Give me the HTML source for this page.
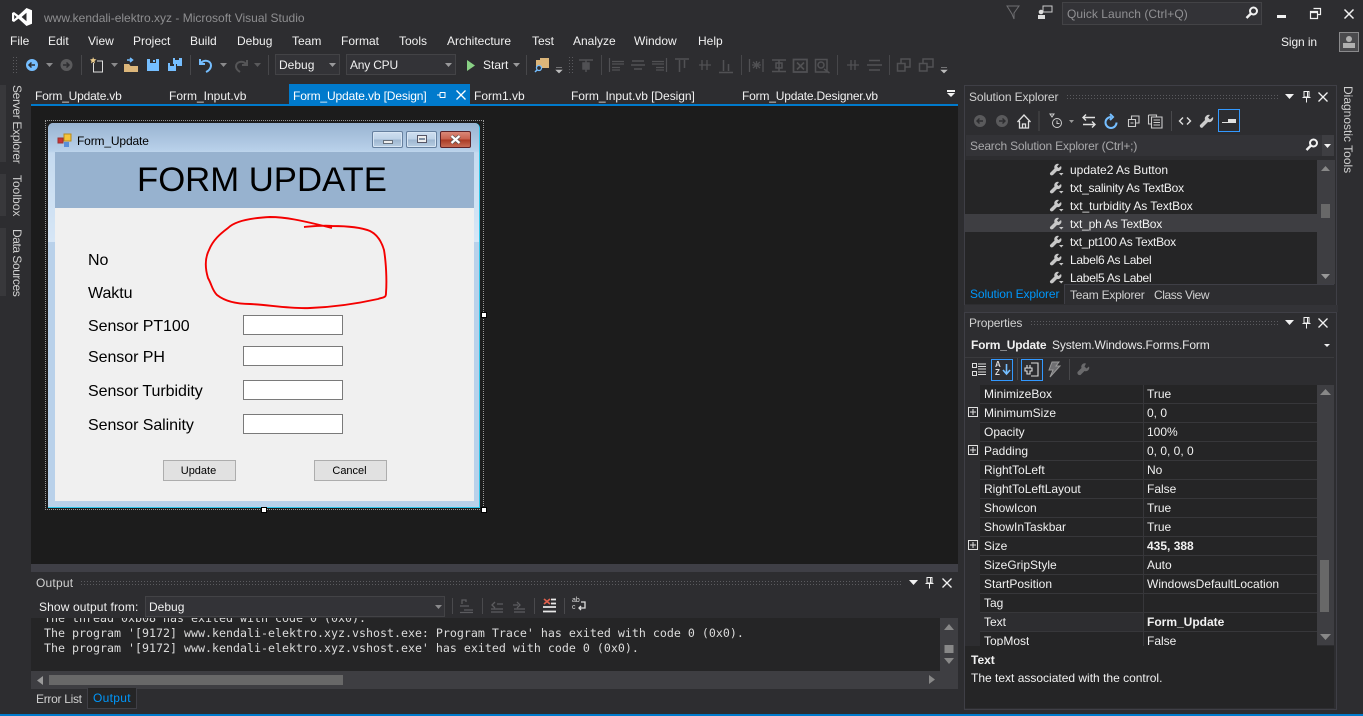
<!DOCTYPE html>
<html><head><meta charset="utf-8"><style>
html,body{margin:0;padding:0;width:1363px;height:716px;overflow:hidden;background:#2d2d30}
body{position:relative;font:12px/16px "Liberation Sans",sans-serif;color:#f1f1f1}
.a{position:absolute}
.t{position:absolute;white-space:nowrap;line-height:16px}
.m{font-size:12px;color:#f1f1f1;top:33px}
.tab{top:88px;color:#f1f1f1}
.g{background-image:radial-gradient(#5a5a5e 0.6px,transparent .7px);background-size:3px 3px}
.sl{left:1070px;color:#f1f1f1}
.pn{position:absolute;left:984px;color:#f1f1f1;white-space:nowrap}
.pv{position:absolute;left:1147px;color:#f1f1f1;white-space:nowrap}
.fl{position:absolute;color:#000;font-size:16px;line-height:20px;left:88px;white-space:nowrap;letter-spacing:-.06px}
.tb{position:absolute;left:243px;width:98px;height:18px;background:#fff;border:1px solid #7a7a7a}
.btn{position:absolute;top:460px;width:71px;height:19px;background:#e1e1e1;border:1px solid #adadad;color:#000;text-align:center;font-size:11px;line-height:21px;text-indent:-2px}
.wb{position:absolute;top:131px;width:29px;height:15px;border:1px solid #66809f;border-radius:2px;background:linear-gradient(#cfdff0 0,#bdd2e7 48%,#9db6d0 52%,#b9cee3 100%);box-shadow:inset 0 0 0 1px #d8e6f4}
svg{position:absolute;overflow:visible}
</style></head><body>

<!-- title bar -->
<svg style="left:11px;top:7px" width="22" height="20" viewBox="0 0 22 20"><path d="M15.500 1 L21 3.200 V16.800 L15.500 19 L7.500 11.600 L3 15 L1 14 V6 L3 5 L7.500 8.400 Z M15.500 5.800 L10.600 10 L15.500 14.200 Z M3.200 7.800 V12.200 L5.600 10 Z" fill="#fff" fill-rule="evenodd"/></svg>
<div class="t" style="left:44px;top:10px;color:#8e8e90">www.kendali-elektro.xyz - Microsoft Visual Studio</div>
<svg style="left:1006px;top:5px" width="14" height="15"><path d="M1 1H13L8 8V14L6 9Z" fill="none" stroke="#6f6f72" stroke-width="1"/></svg>
<svg style="left:1037px;top:5px" width="16" height="15"><rect x="6" y="1" width="9" height="6" fill="none" stroke="#ccc"/><circle cx="4" cy="7" r="2.300" fill="#ddd"/><rect x="1" y="10" width="7" height="4" fill="#ddd"/></svg>
<div class="a" style="left:1062px;top:2px;width:198px;height:21px;background:#333337;border:1px solid #434346"></div>
<div class="t" style="left:1067px;top:6px;color:#909093;letter-spacing:.05px">Quick Launch (Ctrl+Q)</div>
<svg style="left:1245px;top:6px" width="14" height="14"><circle cx="8.500" cy="5" r="3.500" fill="none" stroke="#f1f1f1" stroke-width="2"/><path d="M6 7.500L1.500 12" stroke="#f1f1f1" stroke-width="2.400"/></svg>
<div class="a" style="left:1277px;top:15px;width:9px;height:3px;background:#f1f1f1"></div>
<svg style="left:1310px;top:8px" width="12" height="12"><path d="M3.500 .5H10.500V6.500H8M.5 3.500H7.500V10.500H.5ZM.5 4.500H7.500" fill="none" stroke="#f1f1f1" stroke-width="1.200"/></svg>
<svg style="left:1344px;top:9px" width="10" height="10"><path d="M.5 .5L9.500 9.500M9.500 .5L.5 9.500" stroke="#f1f1f1" stroke-width="1.500"/></svg>

<!-- menu -->
<div class="t m" style="left:10px">File</div><div class="t m" style="left:48px">Edit</div><div class="t m" style="left:88px">View</div><div class="t m" style="left:133px">Project</div><div class="t m" style="left:190px">Build</div><div class="t m" style="left:237px">Debug</div><div class="t m" style="left:292px">Team</div><div class="t m" style="left:341px">Format</div><div class="t m" style="left:399px">Tools</div><div class="t m" style="left:447px">Architecture</div><div class="t m" style="left:532px">Test</div><div class="t m" style="left:573px">Analyze</div><div class="t m" style="left:634px">Window</div><div class="t m" style="left:698px">Help</div>
<div class="t" style="left:1281px;top:34px;letter-spacing:-.1px">Sign in</div>
<div class="a" style="left:1339px;top:32px;width:18px;height:18px;background:#4a4a4d;border:1px solid #8a8a8c"></div>
<svg style="left:1342px;top:35px" width="14" height="14"><circle cx="7" cy="4" r="3" fill="#b0b0b0"/><rect x="1" y="8" width="12" height="5" fill="#b0b0b0"/></svg>

<!-- toolbar -->
<div class="a g" style="left:12px;top:56px;width:5px;height:17px"></div>
<svg style="left:25px;top:58px" width="14" height="14"><circle cx="7" cy="7" r="6" fill="#75beff"/><path d="M10 7H4M6.500 4.500L4 7L6.500 9.500" stroke="#2d2d30" stroke-width="1.500" fill="none"/></svg>
<svg style="left:46px;top:63px" width="7" height="4"><path d="M0 0H7L3.500 4Z" fill="#8a8a8c"/></svg>
<svg style="left:60px;top:58px" width="13" height="14"><circle cx="6.500" cy="7" r="6" fill="#5a5a5c"/><path d="M3 7H9M6.500 4.500L9 7L6.500 9.500" stroke="#2d2d30" stroke-width="1.500" fill="none"/></svg>
<div class="a" style="left:81px;top:55px;width:1px;height:20px;background:#47474a"></div>
<svg style="left:90px;top:57px" width="15" height="16"><path d="M3.500 6V15H12.500V4H7" fill="none" stroke="#ddd"/><path d="M3 0L4 2L6.500 2.500L4.500 4L5 6.500L3 5L1 6.500L1.500 4L0 2.500L2.500 2Z" fill="#e8c98a"/></svg>
<svg style="left:111px;top:63px" width="7" height="4"><path d="M0 0H7L3.500 4Z" fill="#8a8a8c"/></svg>
<svg style="left:124px;top:57px" width="15" height="16"><path d="M0 7H5L6.500 9H14V15H0Z" fill="#dcb67a"/><path d="M3 3H8M6 1L8.500 3L6 5" fill="none" stroke="#75beff" stroke-width="1.500"/></svg>
<svg style="left:147px;top:59px" width="12" height="12"><path d="M0 0H3V4H9V0H12V12H0Z" fill="#75beff"/><rect x="6" y="1" width="2" height="2" fill="#75beff"/></svg>
<svg style="left:168px;top:58px" width="15" height="14"><path d="M5 0H7V2H11V0H14V8H9V6H5Z" fill="#75beff"/><path d="M0 5H2V8H6V5H8V13H0Z" fill="#75beff"/></svg>
<div class="a" style="left:190px;top:55px;width:1px;height:20px;background:#47474a"></div>
<svg style="left:198px;top:57px" width="15" height="16"><path d="M2 2V7H7M2.500 6.500C6 2 13 3.500 13 8.500C13 11.500 10.500 14 8 15" fill="none" stroke="#75beff" stroke-width="2"/></svg>
<svg style="left:220px;top:63px" width="7" height="4"><path d="M0 0H7L3.500 4Z" fill="#8a8a8c"/></svg>
<svg style="left:234px;top:58px" width="14" height="15"><path d="M13 2V7H8M12.500 6.500C9 2 2 3.500 2 8.500C2 11.500 4.500 13 6 14" fill="none" stroke="#555557" stroke-width="2"/></svg>
<svg style="left:254px;top:63px" width="7" height="4"><path d="M0 0H7L3.500 4Z" fill="#5a5a5c"/></svg>
<div class="a" style="left:268px;top:55px;width:1px;height:20px;background:#47474a"></div>
<div class="a" style="left:275px;top:54px;width:63px;height:19px;background:#333337;border:1px solid #434346"></div>
<div class="t" style="left:279px;top:57px">Debug</div>
<svg style="left:329px;top:63px" width="7" height="4"><path d="M0 0H7L3.500 4Z" fill="#9a9a9c"/></svg>
<div class="a" style="left:346px;top:54px;width:108px;height:19px;background:#333337;border:1px solid #434346"></div>
<div class="t" style="left:350px;top:57px;letter-spacing:-.2px">Any CPU</div>
<svg style="left:445px;top:63px" width="7" height="4"><path d="M0 0H7L3.500 4Z" fill="#9a9a9c"/></svg>
<svg style="left:467px;top:60px" width="9" height="11"><path d="M0 0L8 5.500L0 11Z" fill="#89d185"/></svg>
<div class="t" style="left:483px;top:57px">Start</div>
<svg style="left:513px;top:63px" width="7" height="4"><path d="M0 0H7L3.500 4Z" fill="#9a9a9c"/></svg>
<div class="a" style="left:526px;top:55px;width:1px;height:20px;background:#47474a"></div>
<svg style="left:534px;top:57px" width="16" height="16"><path d="M2 3H6V1H15V11H2Z" fill="#dcb67a"/><circle cx="5" cy="11" r="2.500" fill="#2d2d30" stroke="#75beff" stroke-width="1.300"/><path d="M3 13L1 15" stroke="#75beff" stroke-width="1.500"/></svg>
<svg style="left:555px;top:67px" width="8" height="7"><path d="M1 .5H7M1 3H7L4 6Z" fill="#bbb" stroke="#bbb" stroke-width=".6"/></svg>
<div class="a g" style="left:568px;top:56px;width:5px;height:17px"></div>
<svg style="left:0;top:0" width="1000" height="80" fill="none" stroke="#515154" stroke-width="1.500">
<path d="M579 60H593M586 60V72"/><path d="M583 63H589V69H583Z" fill="#515154"/>
<path d="M609.500 58V72M612 61.500H624M612 64H624M612 67.500H620M612 70H620" stroke-width="1.200"/>
<path d="M632 61H644M631 65H645M634 69H642"/>
<path d="M666.500 58V72M652 61.500H664M652 64H664M656 67.500H664M656 70H664" stroke-width="1.200"/>
<path d="M675 59H689M679.500 60V72M684.500 60V68" />
<path d="M699 65H711M702 60V70M707 60V70" stroke-width="1.300"/>
<path d="M719 72.500H733M723.500 60V71M728.500 64V71"/>
<path d="M749.500 59V72M763 59V72M752 65H761M756.500 61V69M753 62L760 68M760 62L753 68" stroke-width="1.300"/>
<path d="M772 60H786M772 71.500H786M779 60V71.500M776 63H782V68H776Z"/>
<path d="M793.500 59.500H807V72H793.500ZM797 62.500L804 69.500M804 62.500L797 69.500" stroke-width="1.700"/>
<path d="M815.500 59.500H827V72H815.500ZM824 69L829.500 73"/><circle cx="821" cy="65" r="3"/>
<path d="M847 65H859M851 60V70M855 60V70" stroke-width="1.300"/>
<path d="M869 60.500H880M867 65H882M869 70H880"/>
<path d="M897.500 63.500V71H905V63.500ZM901 63V59H910V67H905"/>
<path d="M919.500 63.500V71H927V63.500ZM923 63V59H933V67H927"/>
</svg>
<div class="a" style="left:601px;top:55px;width:1px;height:20px;background:#47474a"></div>
<div class="a" style="left:741px;top:55px;width:1px;height:20px;background:#47474a"></div>
<div class="a" style="left:837px;top:55px;width:1px;height:20px;background:#47474a"></div>
<div class="a" style="left:889px;top:55px;width:1px;height:20px;background:#47474a"></div>
<svg style="left:940px;top:67px" width="8" height="7"><path d="M1 .5H7M1 3H7L4 6Z" fill="#bbb" stroke="#bbb" stroke-width=".6"/></svg>

<!-- left strip -->
<div class="a" style="left:0;top:85px;width:6px;height:77px;background:#38383b"></div>
<div class="a" style="left:0;top:174px;width:6px;height:42px;background:#38383b"></div>
<div class="a" style="left:0;top:228px;width:6px;height:68px;background:#38383b"></div>
<div class="t" style="left:11px;top:85px;transform-origin:0 0;transform:rotate(90deg) translate(0,-14px);color:#d0d0d0;letter-spacing:-.33px">Server Explorer</div>
<div class="t" style="left:11px;top:175px;transform-origin:0 0;transform:rotate(90deg) translate(0,-14px);color:#d0d0d0">Toolbox</div>
<div class="t" style="left:11px;top:229px;transform-origin:0 0;transform:rotate(90deg) translate(0,-14px);color:#d0d0d0;letter-spacing:-.45px">Data Sources</div>

<!-- tabs -->
<div class="a" style="left:289px;top:84px;width:181px;height:20px;background:#007acc"></div>
<div class="a" style="left:31px;top:104px;width:927px;height:2px;background:#007acc"></div>
<div class="t tab" style="left:35px;letter-spacing:-.2px">Form_Update.vb</div>
<div class="t tab" style="left:169px">Form_Input.vb</div>
<div class="t tab" style="left:293px;color:#fff;letter-spacing:-.14px">Form_Update.vb [Design]</div>
<svg style="left:437px;top:91px" width="9" height="8"><path d="M0 4H3M3 1.500V6.500M3 1.500H8V6.500H3" fill="none" stroke="#fff"/></svg>
<svg style="left:456px;top:90px" width="10" height="10"><path d="M.5 .5L9.500 9.500M9.500 .5L.5 9.500" stroke="#fff" stroke-width="1.300"/></svg>
<div class="t tab" style="left:474px">Form1.vb</div>
<div class="t tab" style="left:571px;letter-spacing:-.04px">Form_Input.vb [Design]</div>
<div class="t tab" style="left:742px;letter-spacing:-.18px">Form_Update.Designer.vb</div>
<svg style="left:947px;top:90px" width="8" height="8"><path d="M0 0H8V2H0ZM0 3H8L4 7Z" fill="#f1f1f1"/></svg>

<!-- designer -->
<div class="a" style="left:31px;top:106px;width:927px;height:458px;background:#1c1c1c"></div>
<div class="a" style="left:45px;top:120px;width:437px;height:388px;border:1px dotted #9a9a9a"></div>
<div class="a" style="left:48px;top:123px;width:431px;height:384px;background:#b9d1ea;border-right:1px solid #2ec5e8;border-bottom:1px solid #2ec5e8;border-radius:5px 5px 0 0"></div>
<div class="a" style="left:48px;top:123px;width:431px;height:119px;border-radius:5px 5px 0 0;background:linear-gradient(#99b4d1 0,#b9d1ea 28px,#c5daef 30px,#d6e6f6 119px)"></div>
<svg style="left:58px;top:134px" width="14" height="14"><rect x="0" y="4" width="5" height="5" fill="#c33" stroke="#933"/><rect x="6" y="0" width="7" height="7" fill="#f5c53a" stroke="#b88a20"/><rect x="6" y="8" width="5" height="5" fill="#5a8fd8"/></svg>
<div class="t" style="left:77px;top:133px;color:#000;letter-spacing:-.15px">Form_Update</div>
<div class="wb" style="left:372px"></div>
<div class="a" style="left:383px;top:140px;width:10px;height:4px;background:#eee;border:1px solid #66707c;box-sizing:border-box"></div>
<div class="wb" style="left:406px"></div>
<div class="a" style="left:417px;top:135px;width:10px;height:8px;background:#eee;border:1px solid #556;box-sizing:border-box"></div>
<div class="a" style="left:419px;top:138px;width:6px;height:2px;background:#7f8fa3"></div>
<div class="a" style="left:440px;top:131px;width:29px;height:15px;border:1px solid #5d2228;border-radius:2px;background:linear-gradient(#d98878 0,#c9614e 48%,#a93a24 52%,#c66a54 100%)"></div>
<svg style="left:450px;top:135px" width="11" height="9"><path d="M1.500 1L9.500 8M9.500 1L1.500 8" stroke="#555" stroke-width="3.600"/><path d="M1.500 1L9.500 8M9.500 1L1.500 8" stroke="#fff" stroke-width="2.200"/></svg>
<div class="a" style="left:55px;top:152px;width:419px;height:349px;background:#f0f0f0"></div>
<div class="a" style="left:55px;top:152px;width:419px;height:56px;background:#97b2cf"></div>
<div class="t" style="left:137px;top:160px;color:#000;font-size:34.700px;line-height:41px">FORM UPDATE</div>
<svg style="left:0;top:0" width="500" height="320"><path d="M304 227 C315 226 325 225 332 226 C345 226 360 227 370 231 C378 235 382 243 384 250 C386 262 387 280 386 293 C386 298 384 297 378 299 C360 303 335 307 310 308 C290 309 270 305 250 304 C238 304 226 302 217 295 C212 290 212 285 208 278 C205 268 205 258 209 250 C213 240 220 234 228 228 C235 221 250 218 270 217 C285 217 300 220 332 228" fill="none" stroke="#f40000" stroke-width="1.900"/></svg>
<div class="fl" style="top:251px">No</div>
<div class="fl" style="top:284px">Waktu</div>
<div class="fl" style="top:317px">Sensor PT100</div>
<div class="fl" style="top:348px">Sensor PH</div>
<div class="fl" style="top:382px">Sensor Turbidity</div>
<div class="fl" style="top:416px">Sensor Salinity</div>
<div class="tb" style="top:315px"></div><div class="tb" style="top:346px"></div><div class="tb" style="top:380px"></div><div class="tb" style="top:414px"></div>
<div class="btn" style="left:163px">Update</div>
<div class="btn" style="left:314px">Cancel</div>
<div class="a" style="left:481px;top:312px;width:4px;height:4px;background:#fff;border:1px solid #000"></div>
<div class="a" style="left:261px;top:507px;width:4px;height:4px;background:#fff;border:1px solid #000"></div>
<div class="a" style="left:481px;top:507px;width:4px;height:4px;background:#fff;border:1px solid #000"></div>

<!-- output panel -->
<div class="a" style="left:31px;top:564px;width:927px;height:8px;background:#3f3f46"></div>
<div class="t" style="left:36px;top:575px;color:#d0d0d0;letter-spacing:.2px">Output</div>
<div class="a g" style="left:80px;top:580px;width:822px;height:5px"></div>
<svg style="left:909px;top:580px" width="9" height="5"><path d="M0 0H9L4.500 5Z" fill="#f1f1f1"/></svg>
<svg style="left:925px;top:577px" width="9" height="12"><path d="M2 .5H7V6H2ZM.5 6.500H8.500M4.500 6.500V11.500M5.500 1V6" fill="none" stroke="#f1f1f1"/></svg>
<svg style="left:942px;top:578px" width="10" height="10"><path d="M.5 .5L9.500 9.500M9.500 .5L.5 9.500" stroke="#f1f1f1" stroke-width="1.300"/></svg>
<div class="t" style="left:39px;top:599px;color:#f1f1f1;letter-spacing:.12px">Show output from:</div>
<div class="a" style="left:145px;top:596px;width:298px;height:19px;background:#333337;border:1px solid #434346"></div>
<div class="t" style="left:149px;top:599px">Debug</div>
<svg style="left:435px;top:605px" width="7" height="4"><path d="M0 0H7L3.500 4Z" fill="#8a8a8c"/></svg>
<svg style="left:0;top:0" width="600" height="620" fill="none" stroke="#5c5c5f" stroke-width="1.300"><path d="M452.500 598V614M482.500 598V614M534.500 598V614M564.500 598V614" stroke="#4a4a4d" stroke-width="1"/><path d="M462 604V600H466V602M460 606H469M464 610H473M460 612.500H473"/><path d="M495 602L492 605L495 608M497 604H503M491 609H503M491 612H503"/><path d="M517 602L520 605L517 608M513 605H518M514 609H525M514 612H525" /></svg>
<svg style="left:543px;top:598px" width="13" height="16"><path d="M1 1L7 6M7 1L1 6" stroke="#e0614e" stroke-width="1.600"/><path d="M8 1.500H13M8 5.500H13M0 9H13M0 13.500H13" stroke="#e8e8e8" stroke-width="1.800"/></svg>
<div class="t" style="left:572px;top:597px;font-size:7px;line-height:7px;color:#ddd">ab<br>c</div>
<svg style="left:578px;top:600px" width="9" height="11"><path d="M1 8H7V2H3M3 6L1 8L3 10" fill="none" stroke="#ddd" stroke-width="1.300"/></svg>
<div class="a" style="left:31px;top:618px;width:911px;height:53px;background:#252526;overflow:hidden;font:11.630px/15px 'DejaVu Sans Mono',monospace;color:#dcdcdc;white-space:nowrap">
<div class="a" style="left:13px;top:-7px">The thread 0xb08 has exited with code 0 (0x0).</div>
<div class="a" style="left:13px;top:8px">The program '[9172] www.kendali-elektro.xyz.vshost.exe: Program Trace' has exited with code 0 (0x0).</div>
<div class="a" style="left:13px;top:23px">The program '[9172] www.kendali-elektro.xyz.vshost.exe' has exited with code 0 (0x0).</div>
</div>
<div class="a" style="left:940px;top:618px;width:18px;height:53px;background:#3e3e42"></div>
<svg style="left:944px;top:624px" width="10" height="40"><path d="M0 6L5 0L10 6Z" fill="#888"/><rect x=".5" y="21" width="9" height="8" fill="#888"/><path d="M0 34H10L5 40Z" fill="#888"/></svg>
<div class="a" style="left:31px;top:671px;width:927px;height:18px;background:#3e3e42"></div>
<div class="a" style="left:49px;top:675px;width:294px;height:10px;background:#686868"></div>
<svg style="left:37px;top:676px" width="6" height="9"><path d="M6 0V9L0 4.500Z" fill="#999"/></svg>
<svg style="left:929px;top:675px" width="6" height="9"><path d="M0 0V9L6 4.500Z" fill="#888"/></svg>
<div class="t" style="left:36px;top:691px;color:#d0d0d0;letter-spacing:-.3px">Error List</div>
<div class="a" style="left:87px;top:688px;width:48px;height:20px;background:#252526;border:1px solid #3f3f46;border-top:0"></div>
<div class="t" style="left:93px;top:690px;color:#0097fb;letter-spacing:.3px">Output</div>

<!-- solution explorer -->
<div class="a" style="left:964px;top:85px;width:371px;height:225px;background:#2d2d30;border:1px solid #3f3f46"></div>
<div class="t" style="left:969px;top:89px;color:#d0d0d0;letter-spacing:-.12px">Solution Explorer</div>
<div class="a g" style="left:1066px;top:94px;width:213px;height:6px"></div>
<svg style="left:1285px;top:94px" width="9" height="5"><path d="M0 0H9L4.500 5Z" fill="#f1f1f1"/></svg>
<svg style="left:1302px;top:91px" width="9" height="12"><path d="M2 .5H7V6H2ZM.5 6.500H8.500M4.500 6.500V11.500M5.500 1V6" fill="none" stroke="#f1f1f1"/></svg>
<svg style="left:1318px;top:92px" width="10" height="10"><path d="M.5 .5L9.500 9.500M9.500 .5L.5 9.500" stroke="#f1f1f1" stroke-width="1.300"/></svg>
<svg style="left:974px;top:114px" width="250" height="16"><circle cx="6" cy="7" r="6" fill="#5a5a5c"/><path d="M9 7H3M5.500 4.500L3 7L5.500 9.500" stroke="#2d2d30" stroke-width="1.400" fill="none"/><circle cx="28" cy="7" r="6" fill="#5a5a5c"/><path d="M25 7H31M28.500 4.500L31 7L28.500 9.500" stroke="#2d2d30" stroke-width="1.400" fill="none"/><path d="M43.500 8L50 1L56.500 8M45.500 7V14H54.500V7M48.500 14V10H51.500V14" fill="none" stroke="#e0e0e0" stroke-width="1.300"/><path d="M65 -3V17" stroke="#4a4a4d"/><circle cx="83" cy="9" r="4.500" fill="none" stroke="#ccc"/><path d="M83 6.500V9.500H85.500M76 0H80L78 3Z" fill="none" stroke="#ccc"/><path d="M95 6H100L97.500 9Z" fill="#999"/><path d="M110 3.500H121M112 .5L109 3.500L112 6.500M109 10.500H120M118 7.500L121 10.500L118 13.500" fill="none" stroke="#e0e0e0" stroke-width="1.400"/><path d="M137 3A5.500 5.500 0 1 0 142.500 8.500M136 0L139 3L136 6" fill="none" stroke="#75beff" stroke-width="2"/><path d="M154.500 5.500H161.500V12.500H154.500ZM157.500 5V2H165V9H162M156.500 9H159.500" fill="none" stroke="#ccc" stroke-width="1.100"/><path d="M174.500 1H182.500V3M174.500 1V10H177.500M177.500 3H188V14H177.500ZM179.500 6H186M179.500 8.500H186M179.500 11H186" fill="none" stroke="#ccc" stroke-width="1.100"/><path d="M197.500 -3V17" stroke="#4a4a4d"/><path d="M209 3.500L205.500 7L209 10.500M213 3.500L216.500 7L213 10.500" fill="none" stroke="#e0e0e0" stroke-width="1.400"/><path d="M236 1A4 4 0 0 0 231 6L226 11C225 13 228 15 229 13L234 8A4 4 0 0 0 239 3L236 5.500L234 3.500Z" fill="#ccc"/></svg>
<div class="a" style="left:1218px;top:109px;width:20px;height:21px;border:1px solid #3399ff;background:#2d2d30"></div>
<div class="a" style="left:1222px;top:122px;width:14px;height:1px;background:#e0e0e0"></div>
<div class="a" style="left:1228px;top:119px;width:8px;height:4px;background:#e0e0e0"></div>
<div class="a" style="left:966px;top:135px;width:368px;height:21px;background:#333337"></div>
<div class="t" style="left:970px;top:138px;color:#a8a8aa;letter-spacing:-.18px">Search Solution Explorer (Ctrl+;)</div>
<svg style="left:1305px;top:138px" width="14" height="14"><circle cx="8.500" cy="5" r="3.500" fill="none" stroke="#f1f1f1" stroke-width="2"/><path d="M6 7.500L1.500 12" stroke="#f1f1f1" stroke-width="2.400"/></svg>
<div class="a" style="left:1322px;top:135px;width:12px;height:21px;background:#3e3e42"></div>
<svg style="left:1324px;top:144px" width="7" height="4"><path d="M0 0H7L3.500 4Z" fill="#f1f1f1"/></svg>
<div class="a" style="left:965px;top:160px;width:352px;height:124px;background:#252526"></div>
<div class="a" style="left:965px;top:214px;width:352px;height:18px;background:#3e3e42"></div>
<div class="a" style="left:1317px;top:160px;width:18px;height:124px;background:#3e3e42"></div>
<svg style="left:1321px;top:166px" width="9" height="5"><path d="M0 5L4.500 0L9 5Z" fill="#888"/></svg>
<div class="a" style="left:1321px;top:204px;width:9px;height:14px;background:#686868"></div>
<svg style="left:1321px;top:274px" width="9" height="5"><path d="M0 0H9L4.500 5Z" fill="#999"/></svg>
<svg style="left:1050px;top:164px" width="16" height="120">
<g id="wr"><path d="M9 0A3.500 3.500 0 0 0 4.500 4.500L0 9C-.5 11 1.500 12 3 11L7 7A3.500 3.500 0 0 0 11 2L8.500 4L7 2.500Z" fill="#c8c8c8"/><path d="M9 9H13.500L11.250 11.500Z" fill="#c8c8c8"/></g>
<use href="#wr" y="18"/><use href="#wr" y="36"/><use href="#wr" y="54"/><use href="#wr" y="72"/><use href="#wr" y="90"/><use href="#wr" y="108"/></svg>
<div class="t sl" style="top:162px">update2 As Button</div>
<div class="t sl" style="top:180px;letter-spacing:-.2px">txt_salinity As TextBox</div>
<div class="t sl" style="top:198px;letter-spacing:-.05px">txt_turbidity As TextBox</div>
<div class="t sl" style="top:216px;letter-spacing:-.18px">txt_ph As TextBox</div>
<div class="t sl" style="top:234px;letter-spacing:-.3px">txt_pt100 As TextBox</div>
<div class="t sl" style="top:252px;letter-spacing:-.27px">Label6 As Label</div>
<div class="t sl" style="top:270px;letter-spacing:-.27px">Label5 As Label</div>
<div class="a" style="left:965px;top:284px;width:369px;height:20px;background:#2d2d30"></div>
<div class="a" style="left:965px;top:284px;width:99px;height:20px;background:#252526"></div>
<div class="a" style="left:1064px;top:284px;width:270px;height:1px;background:#3f3f46"></div>
<div class="a" style="left:1064px;top:284px;width:1px;height:20px;background:#3f3f46"></div>
<div class="t" style="left:970px;top:286px;color:#0097fb;letter-spacing:-.12px">Solution Explorer</div>
<div class="t" style="left:1070px;top:287px;color:#d0d0d0;letter-spacing:-.22px">Team Explorer</div>
<div class="t" style="left:1154px;top:287px;color:#d0d0d0;letter-spacing:-.4px">Class View</div>

<!-- properties -->
<div class="a" style="left:964px;top:305px;width:374px;height:7px;background:#333337"></div>
<div class="a" style="left:964px;top:312px;width:371px;height:396px;background:#2d2d30;border:1px solid #3f3f46"></div>
<div class="t" style="left:969px;top:315px;color:#d0d0d0;letter-spacing:-.15px">Properties</div>
<div class="a g" style="left:1030px;top:320px;width:249px;height:6px"></div>
<svg style="left:1285px;top:320px" width="9" height="5"><path d="M0 0H9L4.500 5Z" fill="#f1f1f1"/></svg>
<svg style="left:1302px;top:317px" width="9" height="12"><path d="M2 .5H7V6H2ZM.5 6.500H8.500M4.500 6.500V11.500M5.500 1V6" fill="none" stroke="#f1f1f1"/></svg>
<svg style="left:1318px;top:318px" width="10" height="10"><path d="M.5 .5L9.500 9.500M9.500 .5L.5 9.500" stroke="#f1f1f1" stroke-width="1.300"/></svg>
<div class="t" style="left:971px;top:337px;font-weight:bold;letter-spacing:-.18px">Form_Update</div>
<div class="t" style="left:1052px;top:337px;color:#e8e8e8;letter-spacing:-.12px">System.Windows.Forms.Form</div>
<svg style="left:1324px;top:344px" width="6" height="3"><path d="M0 0H6L3 3Z" fill="#f1f1f1"/></svg>
<div class="a" style="left:965px;top:357px;width:369px;height:1px;background:#3a3a3d"></div>
<svg style="left:972px;top:362px" width="14" height="15" fill="none" stroke="#ddd"><path d="M.5 1.500H4.500V5.500H.5ZM.5 9.500H4.500V13.500H.5ZM6 2H14M6 4.500H14M6 7H14M6 10H14M6 12.500H14"/></svg>
<div class="a" style="left:991px;top:359px;width:20px;height:20px;border:1px solid #3399ff"></div>
<div class="t" style="left:995px;top:361px;font-size:8px;line-height:8px;font-weight:bold;color:#ddd">A<br>Z</div>
<svg style="left:1003px;top:364px" width="7" height="11"><path d="M3.500 0V9M0 6L3.500 10L7 6" fill="none" stroke="#75beff" stroke-width="1.600"/></svg>
<div class="a" style="left:1017px;top:358px;width:1px;height:22px;background:#47474a"></div>
<div class="a" style="left:1021px;top:359px;width:20px;height:20px;border:1px solid #3399ff"></div>
<svg style="left:1023px;top:361px" width="18" height="17" fill="none" stroke="#ddd" stroke-width="1.100"><path d="M8 2H15V15H8M4 4V7M7 4V7M2 7H9V10H7V13H4V10H2Z"/></svg>
<svg style="left:1047px;top:361px" width="14" height="17"><path d="M5 1H12L9 5H13L3 16L6 9H2Z" fill="#6f6f72" stroke="#999"/></svg>
<div class="a" style="left:1069px;top:359px;width:1px;height:21px;background:#47474a"></div>
<svg style="left:1077px;top:363px" width="13" height="13"><path d="M9 .5A3.500 3.500 0 0 0 4.500 5L.5 9C0 11 1.500 12.500 3.500 12L7.500 8A3.500 3.500 0 0 0 12 3.500L9.500 5.500L7.500 3.500Z" fill="#6a6a6c"/></svg>

<div class="a" style="left:965px;top:385px;width:352px;height:265px;overflow:hidden;background:#252526"></div>
<div class="a" style="left:965px;top:384px;width:15px;height:266px;background:#2d2d30"></div>
<div class="a" style="left:965px;top:612px;width:178px;height:19px;background:#2d2d30"></div>
<div class="a" style="left:1143px;top:385px;width:1px;height:265px;background:#37373a"></div>
<svg style="left:980px;top:403px" width="337" height="247"><path d="M0 .500H337M0 19.500H337M0 38.500H337M0 57.500H337M0 76.500H337M0 95.500H337M0 114.500H337M0 133.500H337M0 152.500H337M0 171.500H337M0 190.500H337M0 209.500H337M0 228.500H337" stroke="#37373a"/></svg>
<svg style="left:968px;top:407px" width="10" height="150" fill="none" stroke="#e0e0e0"><path d="M.5 .5H9.500V9.500H.5ZM2 5H8M5 2V8"/><path d="M.5 38.500H9.500V47.500H.5ZM2 43H8M5 40V46"/><path d="M.5 133.500H9.500V142.500H.5ZM2 138H8M5 135V141"/></svg>
<div class="pn" style="top:386px">MinimizeBox</div><div class="pv" style="top:386px">True</div>
<div class="pn" style="top:405px">MinimumSize</div><div class="pv" style="top:405px">0, 0</div>
<div class="pn" style="top:424px">Opacity</div><div class="pv" style="top:424px">100%</div>
<div class="pn" style="top:443px">Padding</div><div class="pv" style="top:443px">0, 0, 0, 0</div>
<div class="pn" style="top:462px">RightToLeft</div><div class="pv" style="top:462px">No</div>
<div class="pn" style="top:481px">RightToLeftLayout</div><div class="pv" style="top:481px">False</div>
<div class="pn" style="top:500px">ShowIcon</div><div class="pv" style="top:500px">True</div>
<div class="pn" style="top:519px">ShowInTaskbar</div><div class="pv" style="top:519px">True</div>
<div class="pn" style="top:538px">Size</div><div class="pv" style="top:538px;font-weight:bold">435, 388</div>
<div class="pn" style="top:557px">SizeGripStyle</div><div class="pv" style="top:557px">Auto</div>
<div class="pn" style="top:576px">StartPosition</div><div class="pv" style="top:576px">WindowsDefaultLocation</div>
<div class="pn" style="top:595px">Tag</div>
<div class="pn" style="top:614px">Text</div><div class="pv" style="top:614px;font-weight:bold">Form_Update</div>
<div class="pn" style="top:633px;height:13px;overflow:hidden">TopMost</div><div class="pv" style="top:633px;height:13px;overflow:hidden">False</div>
<div class="a" style="left:1317px;top:385px;width:17px;height:260px;background:#3e3e42"></div>
<svg style="left:1320px;top:389px" width="11" height="6"><path d="M0 6L5.500 0L11 6Z" fill="#888"/></svg>
<div class="a" style="left:1320px;top:560px;width:9px;height:52px;background:#686868"></div>
<svg style="left:1320px;top:634px" width="11" height="6"><path d="M0 0H11L5.500 6Z" fill="#888"/></svg>
<div class="a" style="left:965px;top:646px;width:369px;height:62px;background:#252526"></div>
<div class="t" style="left:971px;top:652px;font-weight:bold">Text</div>
<div class="t" style="left:971px;top:670px">The text associated with the control.</div>

<!-- right strip -->
<div class="t" style="left:1342px;top:86px;transform-origin:0 0;transform:rotate(90deg) translate(0,-14px);color:#d0d0d0">Diagnostic Tools</div>

<!-- status bar -->
<div class="a" style="left:0;top:714px;width:1363px;height:2px;background:#007acc"></div>
</body></html>
